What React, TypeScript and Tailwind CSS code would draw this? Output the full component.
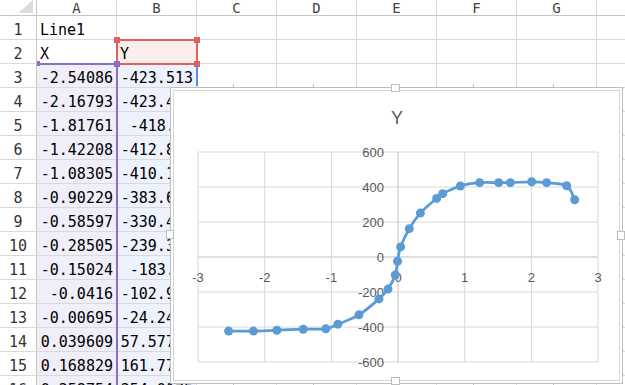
import React from "react";

const cols = ["A", "B", "C", "D", "E", "F", "G", "H"];

// values shown in the sheet (rows 3..16)
const xs = ["-2.54086", "-2.16793", "-1.81761", "-1.42208", "-1.08305", "-0.90229", "-0.58597", "-0.28505", "-0.15024", "-0.0416", "-0.00695", "0.039609", "0.168829", "0.258754"];
const ys = ["-423.513", "-423.417", "-418.27", "-412.834", "-410.129", "-383.614", "-330.452", "-239.318", "-183.21", "-102.957", "-24.2416", "57.57734", "161.7752", "254.0175"];

// points plotted in the chart
const points: [number, number][] = [
  [-2.54086, -423.5], [-2.16793, -423.4], [-1.81761, -418.3], [-1.42208, -412.8], [-1.08305, -410.1],
  [-0.90229, -383.6], [-0.58597, -330.5], [-0.28505, -239.3], [-0.15024, -183.2], [-0.0416, -103],
  [-0.00695, -24.2], [0.039609, 57.6], [0.168829, 161.8], [0.335, 251], [0.58, 335], [0.67, 362],
  [0.935, 406], [1.225, 425], [1.51, 425], [1.685, 425], [2.005, 430], [2.23, 425], [2.53, 407], [2.65, 327],
];

const px = (x: number) => 397 + x * 66.667;
const py = (y: number) => 256 - y * 0.175;

function smoothPath(pts: [number, number][]) {
  let d = `M${pts[0][0]},${pts[0][1]}`;
  for (let i = 0; i < pts.length - 1; i++) {
    const p0 = pts[i - 1] || pts[i];
    const p1 = pts[i];
    const p2 = pts[i + 1];
    const p3 = pts[i + 2] || p2;
    const c1x = p1[0] + (p2[0] - p0[0]) / 6;
    const c1y = p1[1] + (p2[1] - p0[1]) / 6;
    const c2x = p2[0] - (p3[0] - p1[0]) / 6;
    const c2y = p2[1] - (p3[1] - p1[1]) / 6;
    d += ` C${c1x},${c1y} ${c2x},${c2y} ${p2[0]},${p2[1]}`;
  }
  return d;
}

function Cell({ text, align = "left", bg = "" }: { text?: string; align?: "left" | "right"; bg?: string }) {
  return (
    <div
      className={`w-20 h-6 shrink-0 border-r border-b border-[#d9d9d9] flex items-end overflow-hidden whitespace-nowrap leading-[18px] px-[3px] ${
        align === "right" ? "justify-end" : "justify-start"
      } ${bg}`}
    >
      {text}
    </div>
  );
}

function Chart() {
  const pts = points.map(([x, y]) => [px(x), py(y)] as [number, number]);
  const yTicks = [600, 400, 200, 0, -200, -400, -600];
  const xTicks = [-3, -2, -1, 0, 1, 2, 3];

  return (
    <svg width="447" height="290" viewBox="173 90 447 290" className="block">
      <text x="396" y="123" textAnchor="middle" fontSize="18" fill="#595959" fontFamily="'Liberation Sans', Arial, sans-serif">
        Y
      </text>
      {/* gridlines */}
      {yTicks.map((t) => (
        <line key={t} x1="197" x2="597" y1={py(t)} y2={py(t)} stroke={t === 0 ? "#bfbfbf" : "#d9d9d9"} strokeWidth="1" />
      ))}
      {xTicks.map((t) => (
        <line key={t} x1={px(t)} x2={px(t)} y1="151" y2="361" stroke={t === 0 ? "#bfbfbf" : "#d9d9d9"} strokeWidth="1" />
      ))}
      {/* labels */}
      {yTicks.map((t) => (
        <text key={t} x="383" y={py(t) + 4.5} textAnchor="end" fontSize="13" fill="#595959" fontFamily="'Liberation Sans', Arial, sans-serif">
          {t}
        </text>
      ))}
      {xTicks.map((t) => (
        <text key={t} x={px(t)} y="280.5" textAnchor="middle" fontSize="13" fill="#595959" fontFamily="'Liberation Sans', Arial, sans-serif">
          {t}
        </text>
      ))}
      {/* series */}
      <path d={smoothPath(pts)} fill="none" stroke="#5b9bd5" strokeWidth="2.75" strokeLinejoin="round" strokeLinecap="round" />
      {pts.map(([x, y], i) => (
        <circle key={i} cx={x} cy={y} r="4.5" fill="#5b9bd5" />
      ))}
    </svg>
  );
}

export default function App() {
  const rows: { a?: string; b?: string; num?: boolean }[] = [
    { a: "Line1" },
    { a: "X", b: "Y" },
    ...xs.map((x, i) => ({ a: x, b: ys[i], num: true })),
  ];

  return (
    <div className="relative w-[625px] h-[385px] overflow-hidden bg-white text-black font-['DejaVu_Sans_Mono',monospace] text-[15px]">
      {/* column headers */}
      <div className="flex h-4 border-b border-[#c6c6c6]">
        <div className="w-[37px] shrink-0 border-r border-[#c6c6c6] flex items-end justify-end pr-[3px] pb-[2px]">
          <div className="w-0 h-0 border-l-[15px] border-l-transparent border-b-[13px] border-b-[#dcdcdc]" />
        </div>
        {cols.map((c) => (
          <div key={c} className="w-20 shrink-0 border-r border-[#d9d9d9] flex items-center justify-center text-[14px] leading-none text-[#444]">
            {c}
          </div>
        ))}
      </div>

      {/* rows */}
      {rows.map((r, i) => (
        <div key={i} className="flex">
          <div className="w-[37px] h-6 shrink-0 border-r border-b border-r-[#c6c6c6] border-b-[#d9d9d9] flex items-end justify-center leading-[18px] text-[#333]">
            {i + 1}
          </div>
          <Cell text={r.a} align={r.num ? "right" : "left"} bg={r.num ? "bg-[#f0eef8]" : ""} />
          <Cell text={r.b} align={r.num ? "right" : "left"} bg={r.num ? "bg-[#edf2fc]" : i === 1 ? "bg-[#fdeeee]" : ""} />
          {cols.slice(2).map((c) => (
            <Cell key={c} />
          ))}
        </div>
      ))}

      {/* selection: B2 (red) */}
      <div className="absolute left-[116px] top-[39px] w-[82px] h-[26px] border-2 border-[#e55f5f]" />
      <div className="absolute left-[114px] top-[37px] w-[6px] h-[6px] bg-[#e55f5f]" />
      <div className="absolute left-[194px] top-[37px] w-[6px] h-[6px] bg-[#e55f5f]" />
      <div className="absolute left-[194px] top-[61px] w-[6px] h-[6px] bg-[#e55f5f]" />
      {/* selection: A3:A… (purple) */}
      <div className="absolute left-[37px] top-[63px] w-[80px] h-[2px] bg-[#8f6cc9]" />
      <div className="absolute left-[116px] top-[63px] w-[2px] h-[330px] bg-[#8f6cc9]" />
      <div className="absolute left-[37px] top-[61px] w-[3px] h-[5px] bg-[#8f6cc9]" />
      <div className="absolute left-[114px] top-[61px] w-[6px] h-[6px] bg-[#8f6cc9]" />
      {/* selection: B3:B… (blue) */}
      <div className="absolute left-[196px] top-[66px] w-[2px] h-[20px] bg-[#5b8ee6]" />

      {/* chart object */}
      <div className="absolute left-[170px] top-[87px] w-[453px] h-[297px] border border-[#bdbdbd] bg-white p-[2px]">
        <div className="w-full h-full border border-[#d4d4d4] overflow-hidden">
          <Chart />
        </div>
      </div>
      {/* frame ticks */}
      {[233, 313, 473, 553].map((x) => (
        <React.Fragment key={x}>
          <div className="absolute top-[84px] w-px h-[3px] bg-[#bdbdbd]" style={{ left: x }} />
          <div className="absolute top-[384px] w-px h-[3px] bg-[#bdbdbd]" style={{ left: x }} />
        </React.Fragment>
      ))}
      {/* frame handles */}
      <div className="absolute left-[391px] top-[84px] w-[9px] h-[8px] bg-white border border-[#bdbdbd]" />
      <div className="absolute left-[391px] top-[377px] w-[9px] h-[8px] bg-white border border-[#bdbdbd]" />
      <div className="absolute left-[166px] top-[230px] w-[8px] h-[9px] bg-white border border-[#bdbdbd]" />
      <div className="absolute left-[617px] top-[231px] w-[8px] h-[9px] bg-white border border-[#bdbdbd]" />
    </div>
  );
}
